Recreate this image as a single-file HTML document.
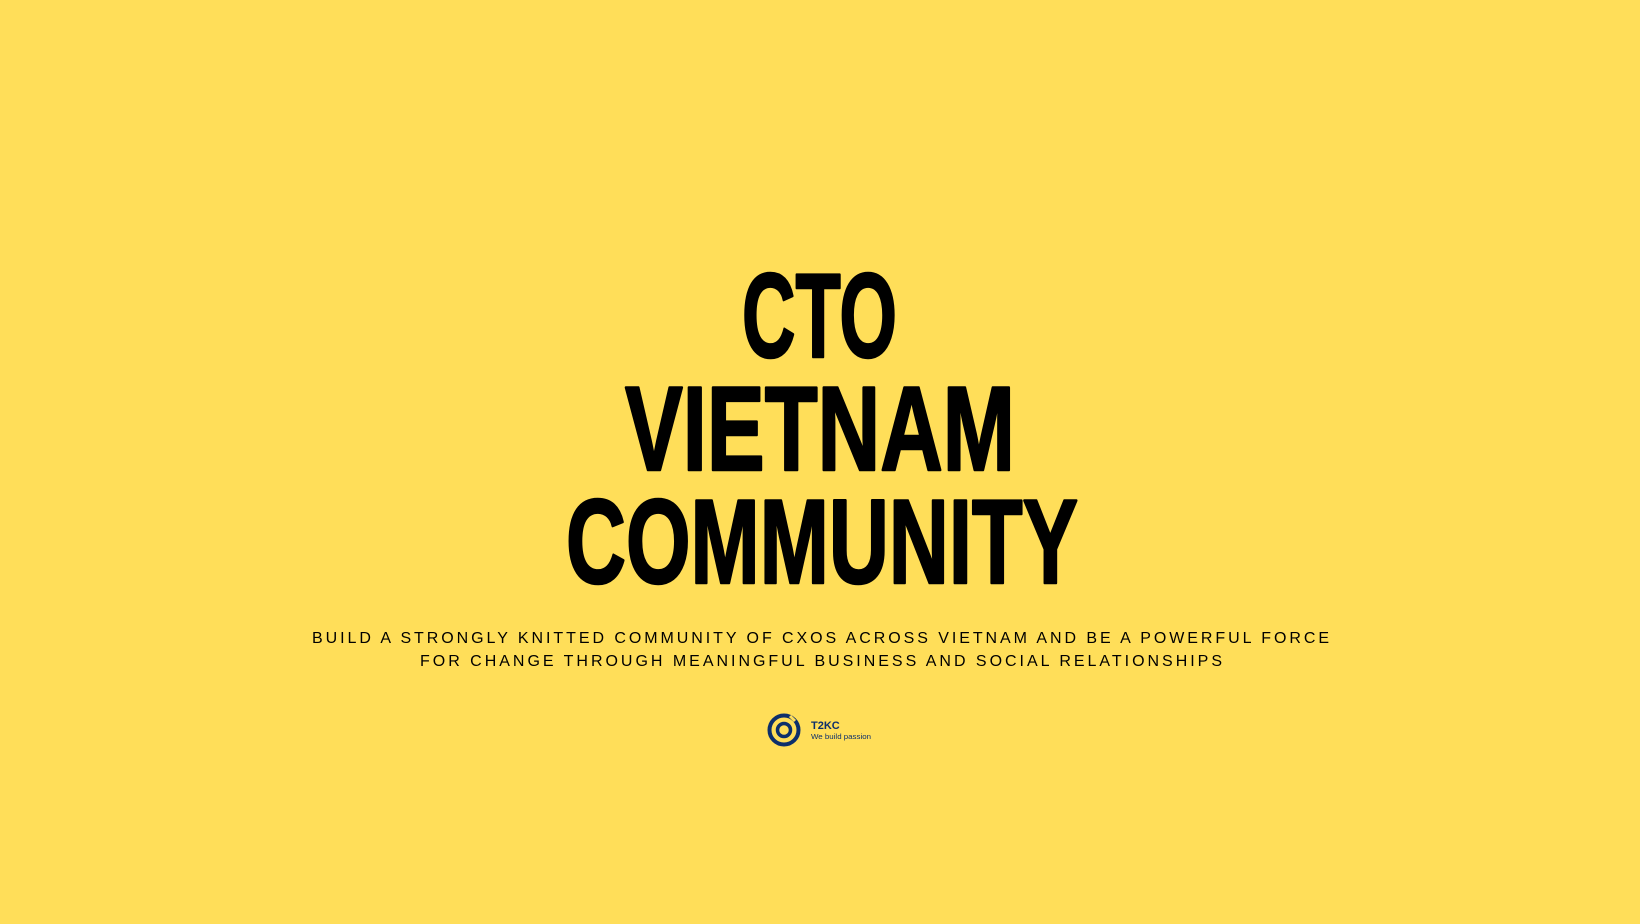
<!DOCTYPE html>
<html><head><meta charset="utf-8"><style>
html,body{margin:0;padding:0;background:#FFDE59;width:1640px;height:924px;overflow:hidden}
svg{display:block}
</style></head><body>
<svg width="1640" height="924" viewBox="0 0 1640 924" xmlns="http://www.w3.org/2000/svg">
<rect width="1640" height="924" fill="#FFDE59"/>
<g font-family="Liberation Sans, sans-serif" font-weight="bold" font-size="120" fill="#000" stroke="#000" stroke-width="2.5" stroke-linejoin="round">
<text x="742" y="357" textLength="155" lengthAdjust="spacingAndGlyphs">CTO</text>
<text x="625" y="470" textLength="390" lengthAdjust="spacingAndGlyphs">VIETNAM</text>
<text x="566" y="583" textLength="512" lengthAdjust="spacingAndGlyphs">COMMUNITY</text>
</g>
<g font-family="Liberation Sans, sans-serif" font-size="16" fill="#000">
<text x="312" y="643" textLength="1017" lengthAdjust="spacing">BUILD A STRONGLY KNITTED COMMUNITY OF CXOS ACROSS VIETNAM AND BE A POWERFUL FORCE</text>
<text x="420" y="666" textLength="802" lengthAdjust="spacing">FOR CHANGE THROUGH MEANINGFUL BUSINESS AND SOCIAL RELATIONSHIPS</text>
</g>
<g fill="none" stroke="#0d2f6b">
<circle cx="784" cy="730" r="14.5" stroke-width="4"/>
<circle cx="784" cy="730" r="6.5" stroke-width="3.5"/>
</g>
<line x1="790" y1="716" x2="795" y2="721" stroke="#FFDE59" stroke-width="3"/>
<g font-family="Liberation Sans, sans-serif" fill="#0d2f6b">
<text x="811" y="729" font-size="11" font-weight="bold">T2KC</text>
<text x="811" y="739" font-size="7.5" textLength="60" lengthAdjust="spacingAndGlyphs">We build passion</text>
</g>
</svg>
</body></html>
